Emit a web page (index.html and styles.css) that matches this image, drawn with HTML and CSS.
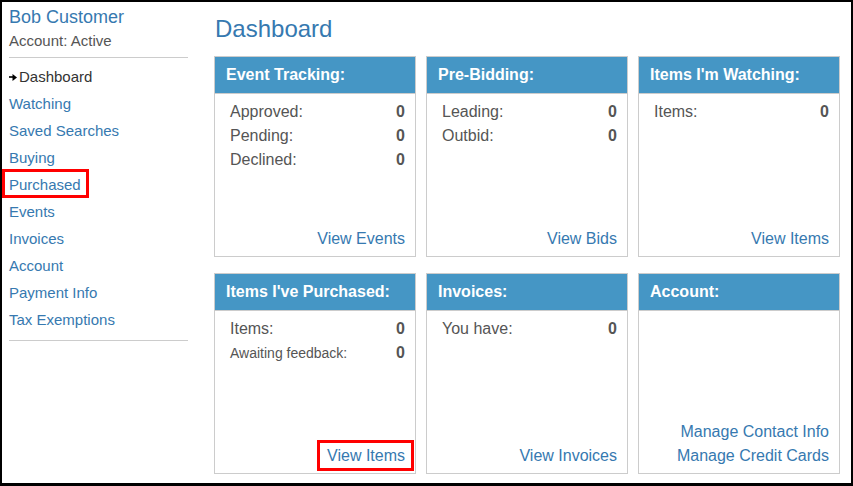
FILE: index.html
```html
<!DOCTYPE html>
<html lang="en">

<head>
    <meta charset="UTF-8">
    <meta name="viewport" content="width=device-width, initial-scale=1.0">
    <title>Dashboard</title>

    <link rel="stylesheet" href="styles.css">
</head>

<body>
    <div class="frame">
        <div class="sidebar">
            <div class="user-name">Bob Customer</div>
            <div class="user-status">Account: Active</div>
            <hr class="divider">
            <ul class="nav">
                <li class="current">
                    <svg class="arrow" width="8" height="7" viewBox="0 0 8 7"><path d="M0 3h4.5" stroke="#000" stroke-width="1.6"/><path d="M3.5 0L8 3.5L3.5 7z" fill="#000"/></svg>Dashboard
                </li>
                <li><a href="#">Watching</a></li>
                <li><a href="#">Saved Searches</a></li>
                <li><a href="#">Buying</a></li>
                <li><a href="#" class="marked marked-nav">Purchased</a></li>
                <li><a href="#">Events</a></li>
                <li><a href="#">Invoices</a></li>
                <li><a href="#">Account</a></li>
                <li><a href="#">Payment Info</a></li>
                <li><a href="#">Tax Exemptions</a></li>
            </ul>
            <hr class="divider divider-bottom">
        </div>

        <div class="main">
            <h1 class="title">Dashboard</h1>

            <div class="cards">
                <div class="card">
                    <div class="card-head">Event Tracking:</div>
                    <div class="card-body">
                        <div class="stat"><span>Approved:</span><b>0</b></div>
                        <div class="stat"><span>Pending:</span><b>0</b></div>
                        <div class="stat"><span>Declined:</span><b>0</b></div>
                        <div class="card-links"><a href="#">View Events</a></div>
                    </div>
                </div>

                <div class="card">
                    <div class="card-head">Pre-Bidding:</div>
                    <div class="card-body">
                        <div class="stat"><span>Leading:</span><b>0</b></div>
                        <div class="stat"><span>Outbid:</span><b>0</b></div>
                        <div class="card-links"><a href="#">View Bids</a></div>
                    </div>
                </div>

                <div class="card">
                    <div class="card-head">Items I'm Watching:</div>
                    <div class="card-body">
                        <div class="stat"><span>Items:</span><b>0</b></div>
                        <div class="card-links"><a href="#">View Items</a></div>
                    </div>
                </div>

                <div class="card">
                    <div class="card-head">Items I've Purchased:</div>
                    <div class="card-body">
                        <div class="stat"><span>Items:</span><b>0</b></div>
                        <div class="stat"><span class="small">Awaiting feedback:</span><b>0</b></div>
                        <div class="card-links"><a href="#" class="marked marked-link">View Items</a></div>
                    </div>
                </div>

                <div class="card">
                    <div class="card-head">Invoices:</div>
                    <div class="card-body">
                        <div class="stat"><span>You have:</span><b>0</b></div>
                        <div class="card-links"><a href="#">View Invoices</a></div>
                    </div>
                </div>

                <div class="card">
                    <div class="card-head">Account:</div>
                    <div class="card-body">
                        <div class="card-links">
                            <a href="#">Manage Contact Info</a>
                            <a href="#">Manage Credit Cards</a>
                        </div>
                    </div>
                </div>
            </div>
        </div>
    </div>
</body>

</html>
```

FILE: styles.css
```css
html, body {
    margin: 0;
    padding: 0;
    background: #fff;
}

body {
    font-family: "Liberation Sans", Arial, sans-serif;
    color: #555;
}

a {
    color: #3679b0;
    text-decoration: none;
}

.frame {
    box-sizing: border-box;
    width: 853px;
    height: 486px;
    border-style: solid;
    border-color: #000;
    border-width: 2px 2px 3px 2px;
    padding: 4px 0 0 7px;
    display: flex;
    gap: 26px;
}

/* Sidebar */

.sidebar {
    width: 179px;
    flex: none;
}

.user-name {
    font-size: 18px;
    line-height: 22px;
    color: #3679b0;
}

.user-status {
    margin-top: 3px;
    font-size: 15px;
    line-height: 20px;
    color: #555;
}

.divider {
    border: 0;
    border-top: 1px solid #ccc;
    margin: 6px 0 0 0;
}

.divider-bottom {
    margin-top: 7px;
}

.nav {
    list-style: none;
    margin: 5px 0 0 0;
    padding: 0;
    font-size: 15px;
    line-height: 27px;
}

.nav li {
    height: 27px;
}

.nav .current {
    color: #333;
}

.arrow {
    margin-right: 2px;
    vertical-align: 1px;
}

/* red annotation boxes */
.marked {
    position: relative;
    display: inline-block;
}

.marked::after {
    content: "";
    position: absolute;
    border: 3px solid #f00;
}

.marked-nav::after {
    left: -7px;
    right: -8px;
    top: -2px;
    bottom: 0;
}

.marked-link::after {
    left: -10px;
    right: -9px;
    top: -4px;
    bottom: -3px;
}

/* Main area */

.main {
    flex: none;
    width: 626px;
}

.title {
    margin: 9px 0 13px 1px;
    font-size: 24px;
    line-height: 28px;
    font-weight: normal;
    color: #3679b0;
}

.cards {
    display: grid;
    grid-template-columns: repeat(3, 202px);
    grid-auto-rows: 201px;
    column-gap: 10px;
    row-gap: 16px;
}

.card {
    box-sizing: border-box;
    border: 1px solid #ccc;
    display: flex;
    flex-direction: column;
}

.card-head {
    height: 36px;
    line-height: 36px;
    padding: 0 11px;
    background: #4596c5;
    border-bottom: 1px solid #ccc;
    color: #fff;
    font-size: 16px;
    font-weight: bold;
}

.card-body {
    flex: 1;
    padding: 6px 10px 5px 15px;
    display: flex;
    flex-direction: column;
    font-size: 16px;
    line-height: 24px;
}

.stat {
    display: flex;
    justify-content: space-between;
}

.stat b {
    color: #555;
}

.stat .small {
    font-size: 14px;
}

.card-links {
    margin-top: auto;
    display: flex;
    flex-direction: column;
    align-items: flex-end;
}
```
